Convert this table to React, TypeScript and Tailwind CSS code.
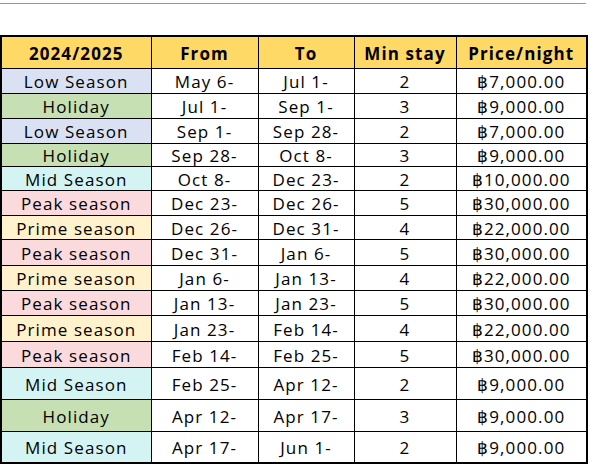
import React from "react";

type Row = {
  season: string;
  bg: string;
  from: string;
  to: string;
  stay: number;
  price: string;
  h: string;
};

const LOW = "bg-[#d9e1f2]";
const HOLIDAY = "bg-[#c6e0b4]";
const MID = "bg-[#d4f4f4]";
const PEAK = "bg-[#fadadd]";
const PRIME = "bg-[#fff2cc]";

const rows: Row[] = [
  { season: "Low Season", bg: LOW, from: "May 6-", to: "Jul 1-", stay: 2, price: "฿7,000.00", h: "h-[25px]" },
  { season: "Holiday", bg: HOLIDAY, from: "Jul 1-", to: "Sep 1-", stay: 3, price: "฿9,000.00", h: "h-[25px]" },
  { season: "Low Season", bg: LOW, from: "Sep 1-", to: "Sep 28-", stay: 2, price: "฿7,000.00", h: "h-[25px]" },
  { season: "Holiday", bg: HOLIDAY, from: "Sep 28-", to: "Oct 8-", stay: 3, price: "฿9,000.00", h: "h-[23px]" },
  { season: "Mid Season", bg: MID, from: "Oct 8-", to: "Dec 23-", stay: 2, price: "฿10,000.00", h: "h-[24px]" },
  { season: "Peak season", bg: PEAK, from: "Dec 23-", to: "Dec 26-", stay: 5, price: "฿30,000.00", h: "h-[25px]" },
  { season: "Prime season", bg: PRIME, from: "Dec 26-", to: "Dec 31-", stay: 4, price: "฿22,000.00", h: "h-[24px]" },
  { season: "Peak season", bg: PEAK, from: "Dec 31-", to: "Jan 6-", stay: 5, price: "฿30,000.00", h: "h-[26px]" },
  { season: "Prime season", bg: PRIME, from: "Jan 6-", to: "Jan 13-", stay: 4, price: "฿22,000.00", h: "h-[25px]" },
  { season: "Peak season", bg: PEAK, from: "Jan 13-", to: "Jan 23-", stay: 5, price: "฿30,000.00", h: "h-[25px]" },
  { season: "Prime season", bg: PRIME, from: "Jan 23-", to: "Feb 14-", stay: 4, price: "฿22,000.00", h: "h-[26px]" },
  { season: "Peak season", bg: PEAK, from: "Feb 14-", to: "Feb 25-", stay: 5, price: "฿30,000.00", h: "h-[26px]" },
  { season: "Mid Season", bg: MID, from: "Feb 25-", to: "Apr 12-", stay: 2, price: "฿9,000.00", h: "h-[32px]" },
  { season: "Holiday", bg: HOLIDAY, from: "Apr 12-", to: "Apr 17-", stay: 3, price: "฿9,000.00", h: "h-[32px]" },
  { season: "Mid Season", bg: MID, from: "Apr 17-", to: "Jun 1-", stay: 2, price: "฿9,000.00", h: "h-[32px]" },
];

// excel-ish cells: thin black grid, centered text
const cell = "border border-black p-0 pt-[2px] text-center align-middle leading-none whitespace-nowrap";

export default function App() {
  return (
    <div
      className="w-[590px] h-[467px] bg-white text-black overflow-hidden"
      style={{ fontFamily: '"Open Sans", "Noto Sans CJK KR", sans-serif' }}
    >
      <div className="mt-[3px] h-px w-[586px] bg-[#ed7d31]" />
      <table className="mt-[31px] border-collapse border-2 border-black table-fixed w-[586px] text-[17px] tracking-[1.1px]">
        <colgroup>
          <col className="w-[150px]" />
          <col className="w-[107px]" />
          <col className="w-[96px]" />
          <col className="w-[102px]" />
          <col className="w-[131px]" />
        </colgroup>
        <thead>
          <tr className="h-[32px] bg-[#ffd966] font-bold">
            <th className={cell}>2024/2025</th>
            <th className={cell}>From</th>
            <th className={cell}>To</th>
            <th className={cell}>Min stay</th>
            <th className={cell}>Price/night</th>
          </tr>
        </thead>
        <tbody>
          {rows.map((r, i) => (
            <tr key={i} className={r.h}>
              <td className={`${cell} ${r.bg}`}>{r.season}</td>
              <td className={cell}>{r.from}</td>
              <td className={cell}>{r.to}</td>
              <td className={cell}>{r.stay}</td>
              <td className={cell}>{r.price}</td>
            </tr>
          ))}
        </tbody>
      </table>
    </div>
  );
}
